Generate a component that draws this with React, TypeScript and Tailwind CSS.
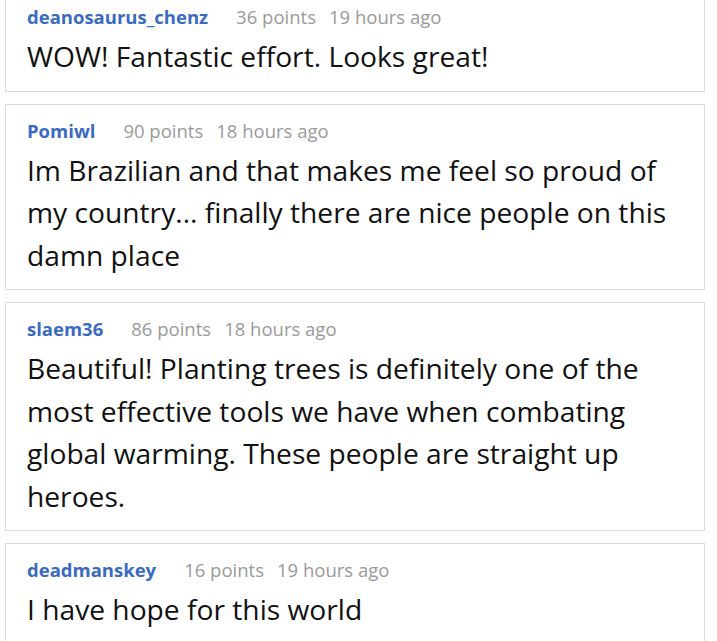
import React from "react";

const comments = [
  { user: "deanosaurus_chenz", points: "36 points", time: "19 hours ago", text: "WOW! Fantastic effort. Looks great!" },
  { user: "Pomiwl", points: "90 points", time: "18 hours ago", text: "Im Brazilian and that makes me feel so proud of my country... finally there are nice people on this damn place" },
  { user: "slaem36", points: "86 points", time: "18 hours ago", text: "Beautiful! Planting trees is definitely one of the most effective tools we have when combating global warming. These people are straight up heroes." },
  { user: "deadmanskey", points: "16 points", time: "19 hours ago", text: "I have hope for this world" },
];

export default function App() {
  return (
    <div className="w-[717px] h-[641px] overflow-hidden bg-white" style={{ fontFamily: '"Open Sans", "Noto Sans", sans-serif' }}>
      <div className="-mt-[10px] ml-[5px] w-[700px] flex flex-col gap-[12px]">
        {comments.map((c, i) => (
          <div key={i} className="border border-[#dcdcdc] bg-white pl-[21px] pr-[20px] pt-[14px] pb-[13px]">
            <div className="flex items-center text-[18.5px] leading-[24px]">
              <span className="font-bold text-[#3a6bc0]">{c.user}</span>
              <span className="ml-[28px] text-[#9a9a9a]">{c.points}</span>
              <span className="ml-[13px] text-[#9a9a9a]">{c.time}</span>
            </div>
            <p className="mt-[6px] text-[28.2px] leading-[42.5px] text-[#111]">{c.text}</p>
          </div>
        ))}
      </div>
    </div>
  );
}
